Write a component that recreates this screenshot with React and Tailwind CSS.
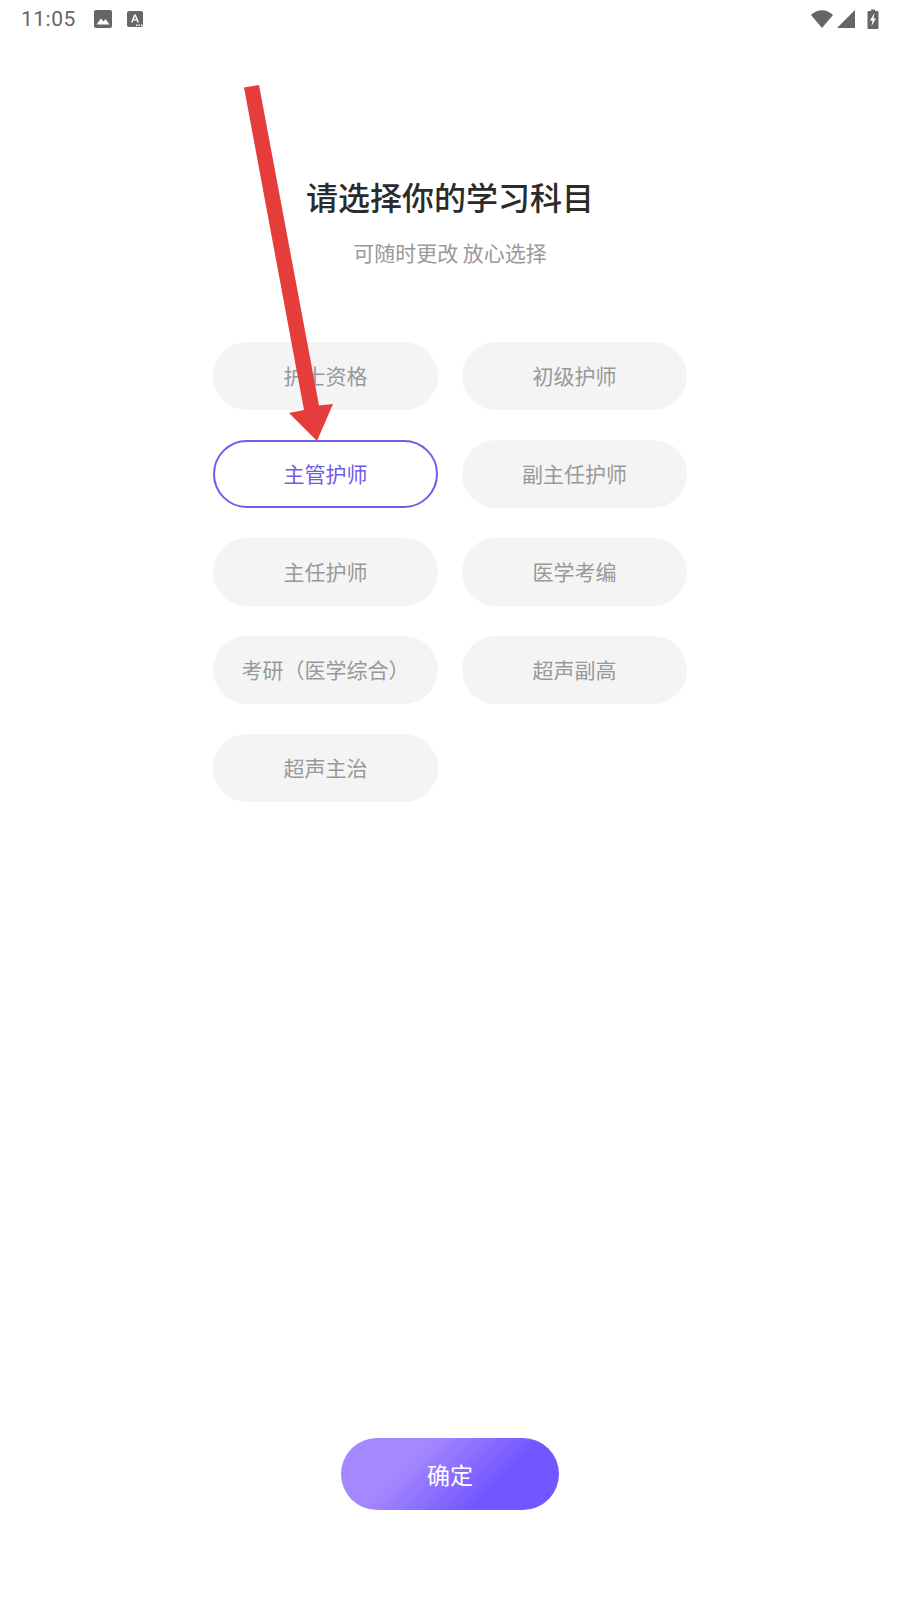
const font = { fontFamily: '"Noto Sans CJK SC", sans-serif' }

const subjects = [
  '护士资格',
  '初级护师',
  '主管护师',
  '副主任护师',
  '主任护师',
  '医学考编',
  '考研（医学综合）',
  '超声副高',
  '超声主治',
]

function StatusBar() {
  return (
    <div className="h-[38px] flex items-center justify-between pl-[21px] pr-[21px] text-[#666]">
      <div className="flex items-center">
        <span className="text-[21px] leading-none tracking-[0.5px] font-['Roboto']">11:05</span>
        <svg className="ml-[18px]" width="18" height="18" viewBox="0 0 18 18">
          <rect width="18" height="18" rx="2" fill="#666" />
          <path d="M2.5 14.5 L7 8.5 L9.5 11.5 L11.5 9 L15.5 14.5 Z" fill="#fff" />
        </svg>
        <svg className="ml-[15px]" width="16" height="16" viewBox="0 0 16 16">
          <rect width="16" height="16" rx="2" fill="#666" />
          <path d="M4 11.5 L7.2 3.5 L8.8 3.5 L12 11.5 L10.4 11.5 L9.7 9.6 L6.3 9.6 L5.6 11.5 Z M6.9 8.2 L9.1 8.2 L8 5.3 Z" fill="#fff" />
          <rect x="9" y="13.5" width="1.5" height="1.5" fill="#fff" />
          <rect x="11.5" y="13.5" width="1.5" height="1.5" fill="#fff" />
          <rect x="14" y="13.5" width="1.5" height="1.5" fill="#fff" />
        </svg>
      </div>
      <div className="flex items-center">
        <svg width="22" height="18" viewBox="0 0 22 18">
          <path d="M0 5 C6 -1.4 16 -1.4 22 5 L11 18 Z" fill="#666" />
        </svg>
        <svg className="ml-[4px]" width="18" height="18" viewBox="0 0 18 18">
          <path d="M18 0 V18 H0 Z" fill="#666" />
        </svg>
        <svg className="ml-[12px]" width="12" height="20" viewBox="0 0 12 20">
          <path d="M1.5 2 H4 V0.5 H8 V2 H10.5 A1 1 0 0 1 11.5 3 V19 A1 1 0 0 1 10.5 20 H1.5 A1 1 0 0 1 0.5 19 V3 A1 1 0 0 1 1.5 2 Z" fill="#666" />
          <path d="M7.5 4 L3 11.5 H5.5 L4.5 17 L9 9.5 H6.5 Z" fill="#fff" />
        </svg>
      </div>
    </div>
  )
}

function SubjectButton({ label, active }) {
  return (
    <div
      className={
        active
          ? 'w-[225px] h-[68px] rounded-full flex items-center justify-center border-2 border-[#6f5ce8] bg-white text-[21px] text-[#6f5ce8]'
          : 'w-[225px] h-[68px] rounded-full flex items-center justify-center bg-[#f4f4f4] text-[21px] text-[#999]'
      }
    >
      {label}
    </div>
  )
}

export default function App() {
  return (
    <div className="relative w-[900px] h-[1600px] bg-white flex flex-col overflow-hidden" style={font}>
      <StatusBar />

      <h1 className="mt-[135px] text-center text-[32px] leading-[46px] font-medium text-[#2b2b2b]">请选择你的学习科目</h1>
      <p className="mt-[18px] text-center text-[21px] leading-[30px] text-[#999]">可随时更改 放心选择</p>

      <div className="mt-[75px] ml-[213px] grid grid-cols-[225px_225px] gap-x-[24px] gap-y-[30px]">
        {subjects.map((s) => (
          <SubjectButton key={s} label={s} active={s === '主管护师'} />
        ))}
      </div>

      <div className="mt-auto mb-[90px] mx-auto w-[218px] h-[72px] rounded-full flex items-center justify-center text-[23px] text-white bg-[linear-gradient(135deg,#a488ff_32%,#7256ff_70%)]">
        确定
      </div>

      {/* annotation arrow over the page */}
      <svg className="absolute left-0 top-0 pointer-events-none" width="900" height="500" viewBox="0 0 900 500">
        <path d="M244 87.5 L259 85 L319 405.5 L333 404 L317 441 L289 413 L304 410 Z" fill="#e53c3c" />
      </svg>
    </div>
  )
}
